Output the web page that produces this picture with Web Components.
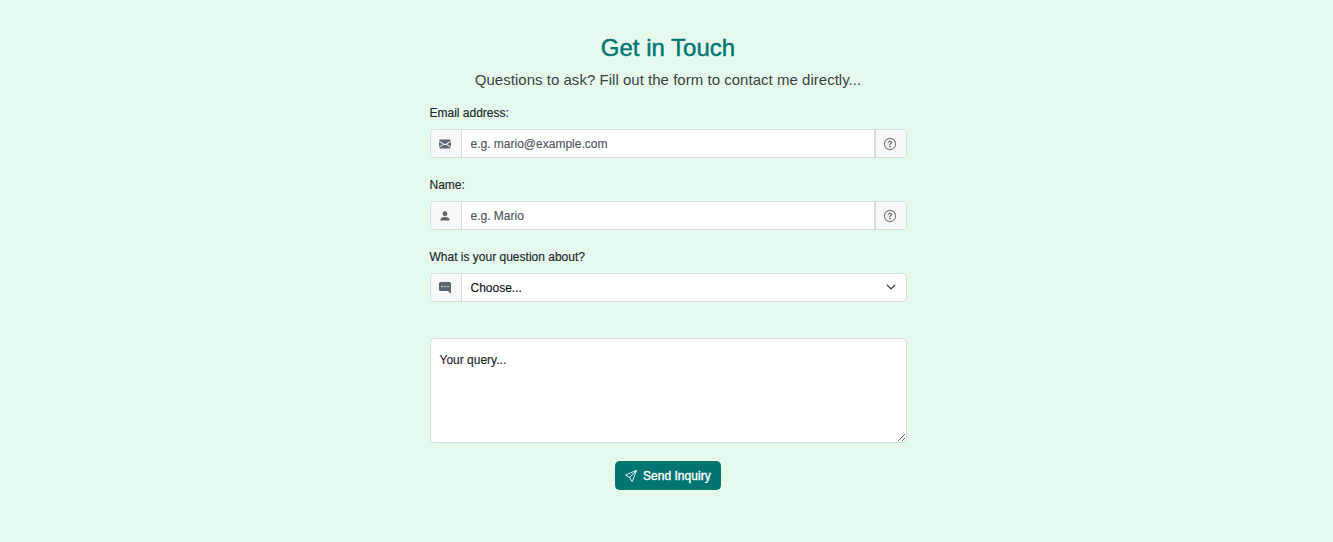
<!DOCTYPE html>
<html lang="en">
<head>
<meta charset="utf-8">
<title>Get in Touch</title>
<style>
html, body { margin: 0; min-height: 100%; background: #e5faed; }
body { font: 12px/18px "Liberation Sans", Arial, sans-serif; color: #212529; -webkit-text-stroke: .15px currentColor; }
</style>
</head>
<body>
<contact-section></contact-section>
<script>
const icons = {
  envelope: '<path stroke="none" d="M.05 3.555A2 2 0 0 1 2 2h12a2 2 0 0 1 1.95 1.555L8 8.414.05 3.555ZM0 4.9v6.7l5.4-3.4L0 4.9ZM6.5 8.95l-6.3 3.95A2 2 0 0 0 2 14h12a2 2 0 0 0 1.808-1.1l-6.3-3.95L8 9.9l-1.5-.95Zm4.1-.75L16 11.6V4.9l-5.4 3.3Z"/>',
  person: '<path d="M8 8.2a3.2 3.2 0 1 0 0-6.4 3.2 3.2 0 0 0 0 6.4ZM2 14v-1.5C2 10.4 5.5 9.4 8 9.4s6 1 6 3.1V14Z"/>',
  chat: '<path d="M16 2a2 2 0 0 0-2-2H2a2 2 0 0 0-2 2v8a2 2 0 0 0 2 2h9.586a1 1 0 0 1 .707.293l2.853 2.853a.5.5 0 0 0 .854-.353V2zM5 6a1 1 0 1 1-2 0 1 1 0 0 1 2 0zm4 0a1 1 0 1 1-2 0 1 1 0 0 1 2 0zm4 0a1 1 0 1 1-2 0 1 1 0 0 1 2 0z"/>',
  question: '<g stroke="currentColor" stroke-width=".3"><path d="M8 15A7 7 0 1 1 8 1a7 7 0 0 1 0 14zm0 1A8 8 0 1 0 8 0a8 8 0 0 0 0 16z"/><path d="M5.255 5.786a.237.237 0 0 0 .241.247h.825c.138 0 .248-.113.266-.25.09-.656.54-1.134 1.342-1.134.686 0 1.314.343 1.314 1.168 0 .635-.374.927-.965 1.371-.673.489-1.206 1.06-1.168 1.987l.003.217a.25.25 0 0 0 .25.246h.811a.25.25 0 0 0 .25-.25v-.105c0-.718.273-.927 1.01-1.486.609-.463 1.244-.977 1.244-2.056 0-1.511-1.276-2.241-2.673-2.241-1.267 0-2.655.59-2.75 2.286zm1.557 5.763c0 .533.425.927 1.01.927.609 0 1.028-.394 1.028-.927 0-.552-.42-.94-1.029-.94-.584 0-1.009.388-1.009.94z"/></g>',
  send: '<path d="M15.854.146a.5.5 0 0 1 .11.54l-5.819 14.547a.75.75 0 0 1-1.329.124l-3.178-4.995L.643 7.184a.75.75 0 0 1 .124-1.33L15.314.037a.5.5 0 0 1 .54.11ZM6.636 10.07l2.761 4.338L14.13 2.576 6.636 10.07Zm6.787-8.201L1.591 6.602l4.339 2.76 7.494-7.493Z"/>'
};
function define(name, html) {
  const template = document.createElement('template');
  template.innerHTML = html;
  customElements.define(name, class extends HTMLElement {
    constructor() {
      super();
      this.attachShadow({ mode: 'open' }).append(template.content.cloneNode(true));
    }
  });
}
customElements.define('ui-icon', class extends HTMLElement {
  connectedCallback() {
    const root = this.shadowRoot || this.attachShadow({ mode: 'open' });
    root.innerHTML = `<style>:host{display:block;width:12px;height:12px;flex:none}svg{display:block;width:100%;height:100%;overflow:visible}</style><svg viewBox="0 0 16 16" fill="currentColor" aria-hidden="true">${icons[this.getAttribute('name')]}</svg>`;
  }
});
define('input-group', `<style>
:host{display:flex;box-sizing:border-box;height:29px;border:1px solid #d5dce1;border-radius:4.5px;background:#fff;overflow:hidden}
.body{display:flex;flex:1;min-width:0}
.addon{box-sizing:border-box;display:flex;align-items:center;padding-left:8.5px;width:31px;flex:none;background:#f7f8fb;color:#5c666e;border-right:1px solid #d5dce1}
slot[name=end]::slotted(*){box-sizing:border-box;display:flex;width:32px;padding:8px 10px 7px 8px;background:#f7f8fb;border-left:2px solid #d5dce1;color:#5c666e}
</style><span class="addon"><slot name="start"></slot></span><div class="body"><slot></slot></div><slot name="end"></slot>`);
define('text-field', `<style>
:host{display:flex;flex:1;min-width:0}
input{flex:1;min-width:0;border:0;outline:0;background:transparent;padding:0 9px;font:inherit;color:inherit;letter-spacing:inherit}
input::placeholder{color:#50565c;opacity:1}
</style><input>`);
define('topic-select', `<style>
:host{display:flex;flex:1;position:relative}
select{appearance:none;flex:1;border:0;outline:0;background:transparent;padding:0 9px;font:inherit;letter-spacing:inherit;color:#111518}
svg{position:absolute;right:10px;top:8px;width:10px;height:10px;pointer-events:none}
</style><select aria-label="Question topic"><option>Choose...</option></select><svg viewBox="0 0 16 16" fill="none" stroke="#343a40" stroke-width="2.2" stroke-linecap="round" stroke-linejoin="round"><path d="m2 5 6 6 6-6"/></svg>`);
define('form-row', `<style>
:host{display:block;margin-bottom:18px}
.label{height:18px;margin-bottom:7px;white-space:nowrap}
</style><div class="label"><slot name="label"></slot></div><slot></slot>`);
define('query-area', `<style>
:host{display:block;position:relative;height:105px}
textarea{display:block;box-sizing:border-box;width:100%;height:105px;border:1px solid #d5dce1;border-radius:4.5px;background:#fff;resize:vertical;outline:0;font:inherit;padding:18px 9px}
label{position:absolute;left:10px;top:13px;pointer-events:none}
</style><textarea id="query"></textarea><label for="query"><slot></slot></label>`);
define('send-button', `<style>
:host{display:block}
button{box-sizing:border-box;display:flex;align-items:center;gap:6px;width:106px;height:29px;padding:0 0 0 9px;border:1px solid #087c5f;border-radius:4.5px;background:#007572;color:#fff;font:inherit;white-space:nowrap}
.t{-webkit-text-stroke:.35px currentColor;letter-spacing:.03px}
</style><button type="button"><ui-icon name="send"></ui-icon><span class="t"><slot></slot></span></button>`);
define('contact-section', `<style>
:host{display:block;box-sizing:border-box;width:477px;margin:0 auto;padding-top:33px;position:relative;left:1.5px}
h2{margin:0;text-align:center;font-size:24px;line-height:29px;font-weight:400;color:#007572;-webkit-text-stroke:.45px currentColor}
.lead{margin:6px 0 13px;text-align:center;font-size:15px;line-height:23px;letter-spacing:.025px;white-space:nowrap;color:#3a4341;-webkit-text-stroke:0}
query-area{margin-top:36px}
send-button{width:106px;margin:18px auto 0}
</style>
<h2><span>Get in Touch</span></h2>
<p class="lead"><span>Questions to ask? Fill out the form to contact me directly...</span></p>
<form-row><span slot="label">Email address:</span><input-group><ui-icon slot="start" name="envelope"></ui-icon><text-field id="email"></text-field><span slot="end"><ui-icon name="question"></ui-icon></span></input-group></form-row>
<form-row><span slot="label">Name:</span><input-group><ui-icon slot="start" name="person"></ui-icon><text-field id="name"></text-field><span slot="end"><ui-icon name="question"></ui-icon></span></input-group></form-row>
<form-row><span slot="label">What is your question about?</span><input-group><ui-icon slot="start" name="chat"></ui-icon><topic-select></topic-select></input-group></form-row>
<query-area>Your query...</query-area>
<send-button>Send Inquiry</send-button>`);
const section = document.querySelector('contact-section').shadowRoot;
section.querySelector('#email').shadowRoot.querySelector('input').placeholder = 'e.g. mario@example.com';
section.querySelector('#name').shadowRoot.querySelector('input').placeholder = 'e.g. Mario';
</script>
</body>
</html>
